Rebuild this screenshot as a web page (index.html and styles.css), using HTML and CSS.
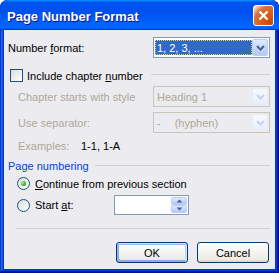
FILE: index.html
```html
<!DOCTYPE html>
<html lang="en">
<head>
    <meta charset="UTF-8">
    <title>Page Number Format</title>
    <link rel="stylesheet" href="styles.css">
</head>
<body>
    <div class="window">
        <div class="titlebar">
            <span class="title">Page Number Format</span>
            <button class="close" aria-label="Close">
                <svg width="11" height="11" viewBox="0 0 11 11"><path d="M1.5 1.5 L9.5 9.5 M9.5 1.5 L1.5 9.5" stroke="#fff" stroke-width="2.2"/></svg>
            </button>
        </div>
        <div class="client">
            <div class="row row-format">
                <span>Number <u>f</u>ormat:</span>
                <div class="combo">
                    <div class="combo-value selected"><span>1, 2, 3, ...</span></div>
                    <span class="drop"><svg width="9" height="6" viewBox="0 0 9 6"><path d="M1 1 L4.5 4.5 L8 1" fill="none" stroke="#4d6185" stroke-width="2"/></svg></span>
                </div>
            </div>
            <div class="row row-check">
                <span class="check"></span>
                <span class="check-label">Include chapter <u>n</u>umber</span>
                <span class="rule"></span>
            </div>
            <div class="row row-sub row-style">
                <span class="dim">Chapter starts with style</span>
                <div class="combo disabled">
                    <div class="combo-value">Heading 1</div>
                    <span class="drop"><svg width="9" height="6" viewBox="0 0 9 6"><path d="M1 1 L4.5 4.5 L8 1" fill="none" stroke="#c7d2ea" stroke-width="2"/></svg></span>
                </div>
            </div>
            <div class="row row-sub row-sep">
                <span class="dim">Use separator:</span>
                <div class="combo disabled">
                    <div class="combo-value"><span>-</span><span class="hyphen">(hyphen)</span></div>
                    <span class="drop"><svg width="9" height="6" viewBox="0 0 9 6"><path d="M1 1 L4.5 4.5 L8 1" fill="none" stroke="#c7d2ea" stroke-width="2"/></svg></span>
                </div>
            </div>
            <div class="row row-sub row-examples">
                <span class="dim examples-label">Examples:</span>
                <span>1-1, 1-A</span>
            </div>
            <div class="row row-group">
                <span class="group-label">Page numbering</span>
                <span class="rule group-rule"></span>
            </div>
            <div class="row row-radio row-continue">
                <span class="radio checked"><span class="dot"></span></span>
                <span class="radio-label"><u>C</u>ontinue from previous section</span>
            </div>
            <div class="row row-radio row-start">
                <span class="radio"></span>
                <span class="radio-label start-label">Start <u>a</u>t:</span>
                <div class="spin">
                    <div class="spin-value"></div>
                    <div class="spin-buttons">
                        <span class="spin-btn"><svg width="7" height="4" viewBox="0 0 7 4"><path d="M0.5 3.5 L3.5 0.5 L6.5 3.5 Z" fill="#4d6185"/></svg></span>
                        <span class="spin-btn"><svg width="7" height="4" viewBox="0 0 7 4"><path d="M0.5 0.5 L3.5 3.5 L6.5 0.5 Z" fill="#4d6185"/></svg></span>
                    </div>
                </div>
            </div>
            <div class="bottom-rule"></div>
            <div class="row buttons">
                <button class="btn default">OK</button>
                <button class="btn">Cancel</button>
            </div>
        </div>
    </div>
</body>
</html>
```

FILE: styles.css
```css
* {
    box-sizing: border-box;
}
html, body {
    margin: 0;
    padding: 0;
    background: #fff;
}
body {
    font-family: 'Liberation Sans', Arial, sans-serif;
    font-size: 11px;
    color: #000;
}
.window {
    width: 279px;
    height: 273px;
    display: flex;
    flex-direction: column;
    border-radius: 8px 8px 0 0;
    background: #0831d9;
    box-shadow: inset -1px -1px #00138c, inset 1px 1px #0831d9, inset -2px -2px #001ea0, inset 2px 2px #166aee, inset -3px -3px #003bda, inset 3px 3px #0855dd;
    overflow: hidden;
}
.titlebar {
    height: 30px;
    flex: none;
    display: flex;
    align-items: center;
    justify-content: space-between;
    padding: 0 5px 0 7px;
    border-radius: 8px 8px 0 0;
    background: linear-gradient(180deg, #0997ff, #0053ee 8%, #0050ee 40%, #06f 88%, #06f 93%, #005bff 95%, #003dd7 96%, #003dd7);
}
.title {
    color: #fff;
    font-weight: bold;
    font-size: 13px;
    padding-top: 2px;
    text-shadow: 1px 1px #0f1089;
}
.close {
    width: 21px;
    height: 21px;
    padding: 0;
    margin-top: 1px;
    border: 1px solid #fff;
    border-radius: 3px;
    display: flex;
    align-items: center;
    justify-content: center;
    background: radial-gradient(circle at 90% 90%, #cc4600 0%, #dc6527 55%, #cd7546 70%, #ffccb2 90%, #fff 100%);
}
.client {
    flex: 1;
    margin: 0 4px 4px;
    padding: 7px 5px 0 4px;
    background: #ecebef;
    display: flex;
    flex-direction: column;
}
.row {
    display: flex;
    align-items: center;
}
.row-format {
    height: 21px;
}
.combo {
    width: 117px;
    height: 21px;
    margin-left: auto;
    padding: 1px;
    border: 1px solid #7f9db9;
    background: #fff;
    display: flex;
}
.combo-value {
    flex: 1;
    display: flex;
    align-items: center;
    padding: 0 2px;
    margin: 1px 0 1px 0;
}
.combo-value.selected {
    margin: 1px 0 1px 0;
    background: #316ac5;
    color: #fff;
    border: 1px dotted #f2c66d;
    padding: 0 1px;
}
.drop {
    width: 16px;
    flex: none;
    display: flex;
    align-items: center;
    justify-content: center;
    border: 1px solid #b9cdf6;
    border-radius: 2px;
    background: linear-gradient(180deg, #e0eafe, #c3d5fc 60%, #b4c8f5);
}
.combo.disabled {
    border-color: #c9c7ba;
    background: #ecebef;
    color: #aca899;
}
.combo.disabled .drop {
    border-color: #e5ebf7;
    background: linear-gradient(180deg, #f6f8fd, #e9eefa);
}
.hyphen {
    margin-left: 14px;
}
.row-check {
    height: 13px;
    margin-top: 11px;
}
.check {
    width: 13px;
    height: 13px;
    margin-left: 2px;
    border: 1px solid #1c5180;
    background: linear-gradient(135deg, #dcdcd7 0%, #fff 100%);
}
.check-label {
    margin-left: 4px;
}
.rule {
    height: 1px;
    background: #d0d0cc;
}
.row-check .rule {
    width: 119px;
    margin-left: auto;
    margin-top: -2px;
}
.dim {
    color: #aca899;
}
.row-sub {
    height: 21px;
    padding-left: 10px;
}
.row-style {
    margin-top: 4px;
}
.row-sep {
    margin-top: 5px;
}
.row-examples {
    height: 13px;
    margin-top: 6px;
}
.examples-label {
    width: 63px;
}
.row-group {
    height: 13px;
    margin-top: 7px;
}
.group-label {
    color: #0046d5;
}
.group-rule {
    flex: 1;
    margin-left: 6px;
}
.row-radio {
    padding-left: 9px;
}
.row-continue {
    height: 13px;
    margin-top: 5px;
}
.row-start {
    height: 20px;
    margin-top: 5px;
}
.radio {
    width: 13px;
    height: 13px;
    flex: none;
    border-radius: 50%;
    border: 1px solid #1c5180;
    background: linear-gradient(135deg, #dcdcd7 0%, #fff 100%);
    display: flex;
    align-items: center;
    justify-content: center;
}
.dot {
    width: 5px;
    height: 5px;
    border-radius: 50%;
    background: radial-gradient(circle at 35% 35%, #b8f0b8 0%, #3cc03c 45%, #1a901a 100%);
}
.radio-label {
    margin-left: 5px;
}
.start-label {
    width: 79px;
}
.spin {
    width: 75px;
    height: 20px;
    border: 1px solid #7f9db9;
    background: #fff;
    display: flex;
    padding: 1px;
}
.spin-value {
    flex: 1;
}
.spin-buttons {
    width: 16px;
    display: flex;
    flex-direction: column;
}
.spin-btn {
    flex: 1;
    display: flex;
    align-items: center;
    justify-content: center;
    border: 1px solid #b9cdf6;
    border-radius: 2px;
    background: linear-gradient(180deg, #e0eafe, #c3d5fc 60%, #b4c8f5);
}
.bottom-rule {
    height: 1px;
    margin: 13px 0 0 8px;
    background: #d0d0cc;
}
.buttons {
    margin-top: 13px;
    justify-content: flex-end;
    gap: 9px;
    padding-right: 1px;
}
.btn {
    width: 72px;
    height: 21px;
    padding: 0;
    font-family: 'Liberation Sans', Arial, sans-serif;
    font-size: 11px;
    color: #000;
    border: 1px solid #003c74;
    border-radius: 3px;
    background: linear-gradient(180deg, #fff, #ecebe5 86%, #d8d0c4);
}
.btn.default {
    box-shadow: inset -1px 1px #cee7ff, inset 1px 2px #98b8ea, inset -2px 2px #bcd4f6, inset 1px -1px #89ade4, inset 2px -2px #89ade4;
}
```
